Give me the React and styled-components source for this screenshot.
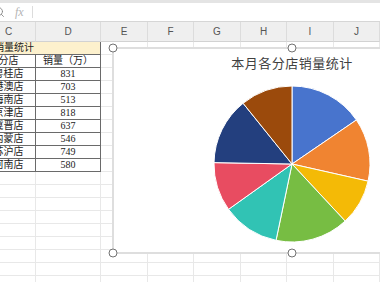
import React from "react";
import styled, { createGlobalStyle } from "styled-components";
import { Search } from "lucide-react";

const stores = [
  { name: "粤桂店", sales: 831, color: "#4874cd" },
  { name: "港澳店", sales: 703, color: "#f08431" },
  { name: "海南店", sales: 513, color: "#f4ba06" },
  { name: "京津店", sales: 818, color: "#77bd43" },
  { name: "冀晋店", sales: 637, color: "#31c3b4" },
  { name: "内蒙店", sales: 546, color: "#e84c61" },
  { name: "苏沪店", sales: 749, color: "#233f7e" },
  { name: "河南店", sales: 580, color: "#9b4a0c" },
];

const columns = ["C", "D", "E", "F", "G", "H", "I", "J"];
const EMPTY_ROWS = 9;

const GlobalStyle = createGlobalStyle`
  body {
    margin: 0;
    font-family: "Liberation Sans", "Noto Sans CJK SC", sans-serif;
    background: #ffffff;
  }
`;

const Page = styled.div`
  position: relative;
  width: 380px;
  height: 282px;
  overflow: hidden;
  background: #ffffff;
`;

const TopStrip = styled.div`
  height: 3px;
  background: #e4e4e4;
`;

const FormulaBar = styled.div`
  display: flex;
  align-items: center;
  height: 18px;
  border-bottom: 1px solid #d6d6d6;
  color: #8a8a8a;
`;

const SearchIcon = styled(Search)`
  margin-left: -7px;
  flex-shrink: 0;
`;

const Fx = styled.span`
  margin-left: 10px;
  font-family: "Liberation Serif", serif;
  font-style: italic;
  font-size: 12px;
  color: #b4b4b4;
`;

const Divider = styled.span`
  width: 1px;
  height: 12px;
  margin-left: 8px;
  background: #dcdcdc;
`;

const Sheet = styled.div`
  display: grid;
  grid-template-columns: 54px 65px 47px 46px 47px 46px 47px 46px;
  grid-template-rows: 20px;
  grid-auto-rows: 13px;
  margin-left: -18px;
  width: 398px;
`;

const ColHeader = styled.div`
  display: flex;
  align-items: center;
  justify-content: center;
  background: #efefef;
  border-right: 1px solid #dcdcdc;
  border-bottom: 1px solid #d2d2d2;
  font-size: 10px;
  color: #555;
`;

const Cell = styled.div`
  grid-column: span ${(p) => p.$span || 1};
  display: flex;
  align-items: center;
  justify-content: ${(p) => (p.$left ? "flex-start" : "center")};
  padding-left: ${(p) => (p.$left ? "12px" : "0")};
  background: ${(p) => p.$bg || "#ffffff"};
  border-right: 1px solid ${(p) => (p.$dark ? "#6a6a6a" : "#e8e8e8")};
  border-bottom: 1px solid ${(p) => (p.$dark ? "#6a6a6a" : "#e8e8e8")};
  font-family: "Liberation Serif", "Noto Sans CJK SC", serif;
  font-size: 10px;
  line-height: 1;
  color: #222;
  white-space: nowrap;
  overflow: hidden;
`;

const Chart = styled.div`
  position: absolute;
  left: 112px;
  top: 47px;
  width: 360px;
  height: 207px;
  box-sizing: border-box;
  border: 2px solid #dedede;
  background: #ffffff;
  display: flex;
  flex-direction: column;
  align-items: center;
`;

const ChartTitle = styled.div`
  padding-top: 6px;
  line-height: 16px;
  font-family: "Noto Sans CJK SC", sans-serif;
  font-size: 13px;
  color: #404040;
  letter-spacing: 0.5px;
`;

const Pie = styled.svg`
  margin-top: 15px;
  display: block;
`;

const Handle = styled.span`
  position: absolute;
  left: ${(p) => p.$x};
  top: ${(p) => p.$y};
  width: 7px;
  height: 7px;
  border: 1.5px solid #727272;
  border-radius: 50%;
  background: #ffffff;
  transform: translate(-50%, -50%);
`;

function slicePaths(data, r) {
  const total = data.reduce((s, d) => s + d.sales, 0);
  let start = 0;
  return data.map((d) => {
    const a0 = (start / total) * Math.PI * 2;
    start += d.sales;
    const a1 = (start / total) * Math.PI * 2;
    const x0 = r + r * Math.sin(a0);
    const y0 = r - r * Math.cos(a0);
    const x1 = r + r * Math.sin(a1);
    const y1 = r - r * Math.cos(a1);
    const large = a1 - a0 > Math.PI ? 1 : 0;
    return {
      color: d.color,
      d: `M${r},${r} L${x0},${y0} A${r},${r} 0 ${large} 1 ${x1},${y1} Z`,
    };
  });
}

const EmptyCells = ({ from = 2, dark }) =>
  columns.slice(from).map((c) => <Cell key={c} $dark={dark} />);

export default function App() {
  const R = 78;
  const slices = slicePaths(stores, R);

  return (
    <>
      <GlobalStyle />
      <Page>
        <TopStrip />
        <FormulaBar>
          <SearchIcon size={12} strokeWidth={1.8} />
          <Fx>fx</Fx>
          <Divider />
        </FormulaBar>

        <Sheet>
          {columns.map((c) => (
            <ColHeader key={c}>{c}</ColHeader>
          ))}

          <Cell $span={2} $left $dark $bg="#fdf1cd">
            销量统计
          </Cell>
          <EmptyCells />

          <Cell $dark>分店</Cell>
          <Cell $dark>销量（万）</Cell>
          <EmptyCells />

          {stores.map((s) => (
            <React.Fragment key={s.name}>
              <Cell $dark>{s.name}</Cell>
              <Cell $dark>{s.sales}</Cell>
              <EmptyCells />
            </React.Fragment>
          ))}

          {Array.from({ length: EMPTY_ROWS }).map((_, i) => (
            <EmptyCells key={i} from={0} />
          ))}
        </Sheet>

        <Chart>
          <ChartTitle>本月各分店销量统计</ChartTitle>
          <Pie width={R * 2} height={R * 2} viewBox={`0 0 ${R * 2} ${R * 2}`}>
            {slices.map((s) => (
              <path key={s.color} d={s.d} fill={s.color} stroke="#ffffff" strokeWidth="1" strokeLinejoin="round" />
            ))}
          </Pie>
          <Handle $x="-1px" $y="-1px" />
          <Handle $x="50%" $y="-1px" />
          <Handle $x="-1px" $y="calc(100% + 1px)" />
          <Handle $x="50%" $y="calc(100% + 1px)" />
        </Chart>
      </Page>
    </>
  );
}
